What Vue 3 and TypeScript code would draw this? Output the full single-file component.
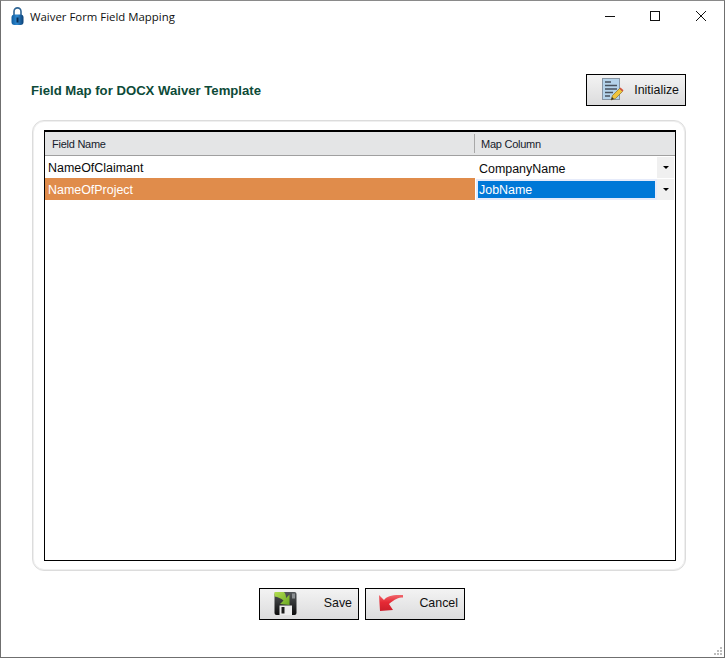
<script setup lang="ts">
interface Row { field: string; column: string; selected: boolean }
const rows: Row[] = [
  { field: 'NameOfClaimant', column: 'CompanyName', selected: false },
  { field: 'NameOfProject', column: 'JobName', selected: true },
]
</script>

<template>
  <div class="window">
    <header class="titlebar">
      <svg class="app-icon" width="13" height="18" viewBox="0 0 13 18">
        <defs>
          <linearGradient id="lockBody" x1="0" y1="0" x2="1" y2="0">
            <stop offset="0" stop-color="#0f5c9e" />
            <stop offset="0.45" stop-color="#2f8ad2" />
            <stop offset="1" stop-color="#0b3f74" />
          </linearGradient>
        </defs>
        <path d="M3 9V4.4a3.5 3.5 0 0 1 7 0V9" fill="none" stroke="#2f6594" stroke-width="1.6" />
        <rect x="0.5" y="7.5" width="12" height="10.5" rx="3" fill="url(#lockBody)" />
        <rect x="5.5" y="10.5" width="2" height="5" fill="#072f58" />
      </svg>
      <span class="title">Waiver Form Field Mapping</span>
      <div class="controls">
        <svg width="12" height="12" viewBox="0 0 12 12"><path d="M1 6.5h10" stroke="#111" stroke-width="1" /></svg>
        <svg class="control-max" width="12" height="12" viewBox="0 0 12 12"><rect x="1.5" y="1.5" width="9" height="9" fill="none" stroke="#111" stroke-width="1" /></svg>
        <svg width="12" height="12" viewBox="0 0 12 12"><path d="M1 1l10 10M11 1L1 11" stroke="#111" stroke-width="1" /></svg>
      </div>
    </header>

    <div class="heading-row">
      <h1 class="heading">Field Map for DOCX Waiver Template</h1>
      <button class="btn btn-init" type="button">
        <svg width="22" height="24" viewBox="0 0 22 24">
          <rect x="0.5" y="0.5" width="17" height="21" fill="#b4d3ea" stroke="#8795a3" />
          <path d="M3 4h6M3 7.5h12M3 11h12M3 14.5h8M3 18h5" stroke="#47525e" stroke-width="1.3" />
          <path d="M9 22l1.5-4.5 7-7 3 3-7 7z" fill="#f0c43a" stroke="#7a6420" stroke-width="0.6" />
          <path d="M17.5 10.5l3 3 1-1.2-3-2.8z" fill="#d8503a" />
          <path d="M9 22l1-3 2 2z" fill="#333" />
        </svg>
        <span>Initialize</span>
      </button>
    </div>

    <section class="card">
      <div class="grid">
        <div class="grid-head">
          <div class="col-field head-cell">Field Name</div>
          <div class="col-map head-cell">Map Column</div>
        </div>
        <div v-for="row in rows" :key="row.field" class="grid-row">
          <div class="col-field cell" :class="{ 'cell-selected': row.selected }">{{ row.field }}</div>
          <div class="col-map map-cell">
            <div class="combo-value" :class="{ 'combo-selected': row.selected }">{{ row.column }}</div>
            <div class="combo-arrow"><i class="caret"></i></div>
          </div>
        </div>
      </div>
    </section>

    <footer class="footer">
      <button class="btn btn-foot" type="button">
        <svg width="24" height="24" viewBox="0 0 24 24">
          <defs>
            <linearGradient id="disk" x1="0" y1="0" x2="0" y2="1">
              <stop offset="0" stop-color="#54585b" />
              <stop offset="1" stop-color="#0c0c0c" />
            </linearGradient>
            <linearGradient id="arrowGreen" x1="0" y1="0" x2="1" y2="1">
              <stop offset="0" stop-color="#b4e050" />
              <stop offset="1" stop-color="#6aa822" />
            </linearGradient>
          </defs>
          <rect x="0.5" y="1" width="22" height="23" rx="2" fill="url(#disk)" />
          <rect x="18" y="2.5" width="3" height="5" fill="#8b8f92" />
          <rect x="5.5" y="14.5" width="12.5" height="9.5" fill="#ececec" />
          <rect x="7.5" y="16" width="3" height="6.5" fill="#1c1c1c" />
          <path d="M0.5 1H10C11.5 2.5 12 4.500 12 7L15.5 3.5V14L6 13L9.500 9.500C7 7.500 4 6 0.500 5.500z" fill="url(#arrowGreen)" />
        </svg>
        <span>Save</span>
      </button>
      <button class="btn btn-foot btn-cancel" type="button">
        <svg width="26" height="20" viewBox="0 0 26 20">
          <defs>
            <linearGradient id="back" x1="0" y1="0" x2="0" y2="1">
              <stop offset="0" stop-color="#f0686e" />
              <stop offset="0.45" stop-color="#e62a35" />
              <stop offset="1" stop-color="#cc1f2b" />
            </linearGradient>
          </defs>
          <path d="M1 2l5 5C9 3 14 1.500 25 2v2.500C20 4.500 17 6 11 11l4 6-13 1z" fill="url(#back)" />
        </svg>
        <span>Cancel</span>
      </button>
    </footer>

    <svg class="grip" width="9" height="9" viewBox="0 0 9 9" fill="#bdbdbd">
      <rect x="6" y="0" width="2" height="2" />
      <rect x="3" y="3" width="2" height="2" /><rect x="6" y="3" width="2" height="2" />
      <rect x="0" y="6" width="2" height="2" /><rect x="3" y="6" width="2" height="2" /><rect x="6" y="6" width="2" height="2" />
    </svg>
  </div>
</template>

<style>
html, body { margin: 0; background: #fff; }
</style>

<style scoped>
.window {
  position: relative;
  box-sizing: border-box;
  width: 725px;
  height: 658px;
  display: flex;
  flex-direction: column;
  background: #fff;
  border: 1px solid #6f6f6f;
  border-top-color: #8a8a8a;
  font-family: "Liberation Sans", Arial, sans-serif;
  color: #000;
}
.titlebar {
  display: flex;
  align-items: center;
  height: 30px;
  padding-left: 10px;
  flex: none;
}
.app-icon { flex: none; margin-right: 6px; }
.title {
  font-family: "Open Sans", sans-serif;
  font-size: 11.4px;
  color: #101010;
}
.controls {
  margin-left: auto;
  display: flex;
  gap: 33px;
  padding-right: 17px;
  align-items: center;
}
.controls svg { display: block; }
.control-max { margin-right: 1px; }
.heading-row {
  display: flex;
  align-items: center;
  justify-content: space-between;
  margin-top: 43px;
  padding: 0 38px 0 30px;
  height: 32px;
  flex: none;
}
.heading {
  margin: 0;
  font-size: 13.15px;
  font-weight: 700;
  color: #0d4a38;
}
.btn {
  box-sizing: border-box;
  width: 100px;
  height: 32px;
  display: flex;
  align-items: center;
  justify-content: space-between;
  border: 1px solid #000;
  outline: none;
  border-radius: 0;
  background: linear-gradient(#f3f3f3, #dcdcdd);
  font-family: "Liberation Sans", Arial, sans-serif;
  font-size: 12.4px;
  color: #111;
  cursor: pointer;
}
.btn-init { padding: 0 6px 0 15px; }
.btn-foot { padding: 0 6px 2px 14px; }
.btn-cancel { padding-left: 12px; }
.card {
  box-sizing: border-box;
  flex: none;
  width: 654px;
  height: 451px;
  margin: 14px 0 0 31px;
  padding: 9px 9px 9px 11px;
  border: 1px solid #dcdcdc;
  box-shadow: inset 0 0 0 1px #efefef;
  border-radius: 12px;
}
.grid {
  box-sizing: border-box;
  height: 100%;
  border: 1px solid #000;
  border-top-width: 2px;
  font-size: 12.45px;
}
.grid-head {
  display: flex;
  height: 24px;
  background: #e4e5e6;
  border-bottom: 1px solid #a0a0a0;
  box-sizing: border-box;
}
.head-cell {
  display: flex;
  align-items: center;
  font-size: 11px;
  letter-spacing: -0.25px;
  color: #15202b;
  padding-left: 7px;
}
.head-cell.col-map {
  border-left: 1px solid #a8a8a8;
  margin: 2px 0 2px -1px;
  padding-left: 6px;
}
.col-field { box-sizing: border-box; width: 430px; flex: none; }
.col-map { box-sizing: border-box; flex: 1; min-width: 0; }
.grid-row { display: flex; height: 22px; }
.cell {
  display: flex;
  align-items: center;
  padding: 2px 0 0 3px;
  color: #0a0a0a;
}
.cell-selected { background: #e08c4b; color: #fff; }
.map-cell {
  display: flex;
  padding: 1px 1px 0 1px;
}
.combo-value {
  box-sizing: border-box;
  flex: 1;
  display: flex;
  align-items: center;
  padding: 2px 0 0 3px;
  color: #0a0a0a;
}
.combo-selected {
  background: #0078d7;
  color: #fff;
  border: 2px solid #e6ebfa;
  padding: 1px 0 0 1px;
}
.combo-arrow {
  width: 17px;
  flex: none;
  display: flex;
  align-items: center;
  justify-content: center;
  background: #f0f0f0;
}
.caret {
  width: 0;
  height: 0;
  border-left: 3px solid transparent;
  border-right: 3px solid transparent;
  border-top: 3px solid #000;
}
.footer {
  flex: none;
  display: flex;
  justify-content: center;
  gap: 6px;
  margin-top: 17px;
  padding-right: 1px;
}
.grip { position: absolute; right: 1px; bottom: 1px; }
</style>
